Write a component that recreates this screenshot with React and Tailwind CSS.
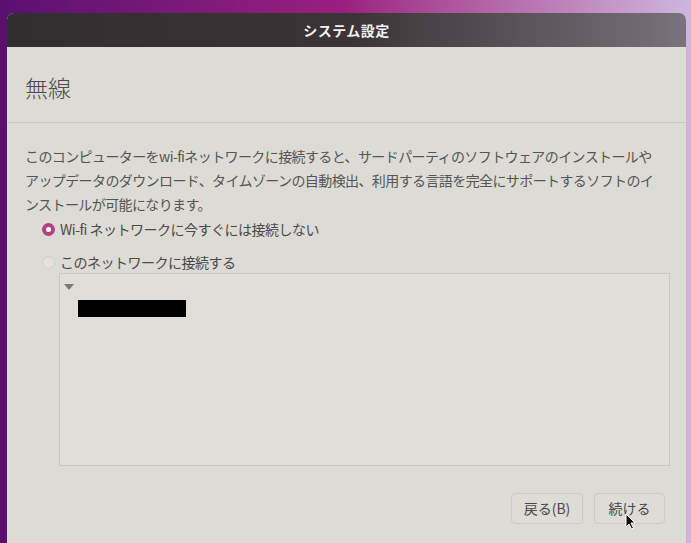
import { useState } from 'react';

const font = { fontFamily: '"Noto Sans CJK JP", "Noto Sans", sans-serif' };

const Radio = ({ checked, label, onClick }) => (
  <button type="button" onClick={onClick} className="flex items-center gap-[5px] text-left">
    {checked ? (
      <span className="w-[13px] h-[13px] rounded-full bg-[#b4417f] flex items-center justify-center">
        <span className="w-[5px] h-[5px] rounded-full bg-white" />
      </span>
    ) : (
      <span className="w-[13px] h-[13px] rounded-full border border-[#cfcec9] bg-[#e2e1dc]" />
    )}
    <span className="text-[14px] leading-[20px] tracking-[-0.5px] text-[#4a4a4a]">{label}</span>
  </button>
);

export default function App() {
  const [choice, setChoice] = useState('none');

  return (
    <div
      style={font}
      className="w-[691px] h-[543px] overflow-hidden bg-gradient-to-r from-[#5a0f70] via-[#9a1f80] to-[#cdb6e0] pt-[13px] pl-[7px] pr-[5px]"
    >
      <div className="relative h-full rounded-t-[7px] overflow-hidden flex flex-col bg-[#dcdbd5]">
        <div className="h-[34px] shrink-0 flex items-center justify-center bg-gradient-to-r from-[#322d2f] via-[#3a3436] to-[#7a727c]">
          <span className="text-[14px] font-bold text-[#f2f0f0] tracking-[0.5px]">システム設定</span>
        </div>

        <div className="h-[76px] shrink-0 flex items-center pl-[18px] border-b border-[#cac9c3]">
          <h1 className="text-[23px] font-light text-[#4a4a4a] mt-[6px]">無線</h1>
        </div>

        <div className="flex-1 flex flex-col pl-[18px] pr-[21px] pt-[21px]">
          <p className="text-[14px] leading-[24px] tracking-[-0.6px] text-[#555] whitespace-nowrap">
            このコンピューターをwi-fiネットワークに接続すると、サードパーティのソフトウェアのインストールや
            <br />
            アップデータのダウンロード、タイムゾーンの自動検出、利用する言語を完全にサポートするソフトのイ
            <br />
            ンストールが可能になります。
          </p>

          <div className="pl-[17px] mt-[3px]">
            <Radio
              checked={choice === 'none'}
              label="Wi-fi ネットワークに今すぐには接続しない"
              onClick={() => setChoice('none')}
            />
          </div>
          <div className="pl-[17px] mt-[13px]">
            <Radio
              checked={choice === 'connect'}
              label="このネットワークに接続する"
              onClick={() => setChoice('connect')}
            />
          </div>

          <div className="ml-[34px] mr-[-5px] mt-[1px] h-[193px] border border-[#c9c8c2] bg-[#dfded9] pt-[10px] pl-[4px]">
            <svg width="10" height="7" viewBox="0 0 10 7">
              <path d="M0 0 L10 0 L5 6 Z" fill="#777" />
            </svg>
            <div className="ml-[14px] mt-[9px] w-[108px] h-[17px] bg-black" />
          </div>

          <div className="flex justify-end gap-[11px] mt-[27px]">
            <button
              type="button"
              className="w-[72px] h-[31px] rounded-[4px] border border-[#cbcac4] bg-[#dedcd7] text-[14px] text-[#484848]"
            >
              戻る(B)
            </button>
            <button
              type="button"
              className="w-[71px] h-[31px] rounded-[4px] border border-[#cbcac4] bg-[#dedcd7] text-[14px] text-[#484848]"
            >
              続ける
            </button>
          </div>
        </div>

        <svg className="absolute left-[618px] top-[500px]" width="11" height="17" viewBox="0 0 11 17">
          <path d="M1 1 L1 14 L4 11 L6.5 16 L8.5 15 L6 10 L10 10 Z" fill="#111" stroke="#fff" strokeWidth="1" />
        </svg>
      </div>
    </div>
  );
}
